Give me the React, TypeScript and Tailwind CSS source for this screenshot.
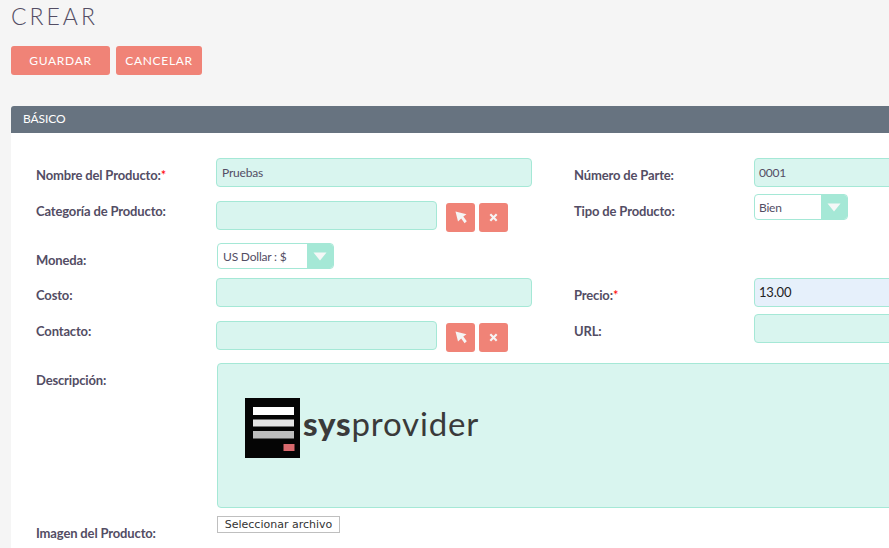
import React from "react";

const inputCls = "h-[29px] rounded-[4px] border border-[#a5e8d6] bg-[#d9f5ef] flex items-center text-[12px] tracking-[-0.2px] text-[#534d64]";

function Label({ text, req, pt }: { text: string; req?: boolean; pt: string }) {
  return (
    <div className={`${pt} text-[13px] leading-[16px] font-bold tracking-[-0.15px] text-[#534d64] whitespace-nowrap`}>
      {text}
      {req && <span className="text-[#ff0000] font-normal">*</span>}
    </div>
  );
}

function ActionButtons({ mt }: { mt: string }) {
  return (
    <div className={`${mt} flex gap-[4px] ml-[9px]`}>
      <button className="w-[29px] h-[29px] rounded-[3px] bg-[#f08377] flex items-center justify-center">
        <svg width="12" height="13" viewBox="0 0 12 13">
          <path d="M0.5 0.5 L11.5 3.2 L8.3 5.6 L11.8 10.2 L9.6 12.2 L6.2 7.6 L3 10.4 Z" fill="#f5f5f5" />
        </svg>
      </button>
      <button className="w-[29px] h-[29px] rounded-[3px] bg-[#f08377] flex items-center justify-center">
        <svg width="9" height="9" viewBox="0 0 9 9">
          <path d="M1.3 1.3 L7.7 7.7 M7.7 1.3 L1.3 7.7" stroke="#f5f5f5" strokeWidth="2.2" />
        </svg>
      </button>
    </div>
  );
}

function Select({ text, w, tw, pl }: { text: string; w: string; tw: string; pl: string }) {
  return (
    <div className={`${w} h-[26px] rounded-[4px] border border-[#a5e8d6] bg-white flex items-center overflow-hidden text-[12px] tracking-[-0.2px] text-[#534d64]`}>
      <div className={`${tw} ${pl} pt-[2px]`}>{text}</div>
      <div className="flex-1 self-stretch bg-[#a5e8d6] flex items-center justify-center">
        <svg width="14" height="9" viewBox="0 0 14 9">
          <path d="M0.5 0.5 H13.5 L7 8.5 Z" fill="#f5f8f7" />
        </svg>
      </div>
    </div>
  );
}

export default function App() {
  return (
    <div className="w-[889px] h-[548px] overflow-hidden bg-[#f5f5f5]" style={{ fontFamily: "Lato, 'Liberation Sans', sans-serif" }}>
      <div className="w-[1200px] pl-[11px]">
        <h1 className="h-[46px] pt-[3px] text-[23px] leading-[26px] font-light tracking-[3px] text-[#534d64]">CREAR</h1>
        <div className="flex gap-[6px] h-[29px]">
          <button className="w-[99px] h-[29px] pt-[1px] rounded-[3px] bg-[#f08377] text-white text-[12px] tracking-[0.7px]">GUARDAR</button>
          <button className="w-[86px] h-[29px] pt-[1px] rounded-[3px] bg-[#f08377] text-white text-[12px] tracking-[0.7px]">CANCELAR</button>
        </div>
        <div className="mt-[31px] bg-white rounded-t-[3px] h-[500px]">
          <div className="h-[27px] pb-[2px] bg-[#677380] rounded-t-[3px] pl-[12px] flex items-center text-[12px] tracking-[-0.1px] text-white">BÁSICO</div>
          <div className="pt-[25px] pl-[25px] grid grid-cols-[180px_358px_180px_1fr] grid-rows-[36px_49px_35px_36px_49px_153px_32px]">
            <Label text="Nombre del Producto:" req pt="pt-[9px]" />
            <div className={`${inputCls} w-[316px] pl-[5px]`}>Pruebas</div>
            <Label text="Número de Parte:" pt="pt-[9px]" />
            <div className={`${inputCls} w-[300px] pl-[4px]`}>0001</div>

            <Label text="Categoría de Producto:" pt="pt-[9px]" />
            <div className="flex items-start">
              <div className={`${inputCls} w-[221px] mt-[7px]`}></div>
              <ActionButtons mt="mt-[9px]" />
            </div>
            <Label text="Tipo de Producto:" pt="pt-[9px]" />
            <Select text="Bien" w="w-[94px]" tw="w-[66px]" pl="pl-[4px]" />

            <Label text="Moneda:" pt="pt-[9px]" />
            <div className="pl-[1px]">
              <Select text="US Dollar : $" w="w-[117px]" tw="w-[89px]" pl="pl-[5px]" />
            </div>
            <div />
            <div />

            <Label text="Costo:" pt="pt-[9px]" />
            <div className={`${inputCls} w-[316px] h-[28px]`}></div>
            <Label text="Precio:" req pt="pt-[9px]" />
            <div className={`${inputCls} w-[300px] h-[28px] pl-[4px] bg-[#e6f0fb] text-[13px] text-[#222222]`}>13.00</div>

            <Label text="Contacto:" pt="pt-[9px]" />
            <div className="flex items-start">
              <div className={`${inputCls} w-[221px] mt-[7px]`}></div>
              <ActionButtons mt="mt-[9px]" />
            </div>
            <Label text="URL:" pt="pt-[9px]" />
            <div className={`${inputCls} w-[300px] h-[28px]`}></div>

            <Label text="Descripción:" pt="pt-[9px]" />
            <div className="col-span-3 pl-[1px]">
              <div className="w-[800px] h-[145px] rounded-[4px] border border-[#a5e8d6] bg-[#d9f5ef] pl-[27px] pt-[34px] flex items-start">
                <svg width="55" height="60" viewBox="0 0 55 60" className="shrink-0">
                  <rect width="55" height="60" fill="#050505" />
                  <rect x="8" y="9" width="41" height="8" fill="#ffffff" />
                  <rect x="8" y="21.5" width="41" height="7" fill="#e4e4e4" />
                  <rect x="8" y="33" width="41" height="7.5" fill="#bdbdbd" />
                  <rect x="38.5" y="46" width="11" height="7" fill="#d96a6e" />
                </svg>
                <div className="ml-[3px] mt-[5px] text-[33px] leading-[40px] text-[#3a3a3a] tracking-[0.025em]">
                  <span className="font-black">sys</span>
                  <span className="font-normal">provider</span>
                </div>
              </div>
            </div>

            <Label text="Imagen del Producto:" pt="pt-[9px]" />
            <div className="col-span-3 pl-[1px]">
              <button className="block w-[123px] h-[17px] border border-[#bfbfbf] bg-white text-[11px] leading-[15px] text-[#333333]" style={{ fontFamily: "'DejaVu Sans', sans-serif" }}>
                Seleccionar archivo
              </button>
            </div>
          </div>
        </div>
      </div>
    </div>
  );
}
